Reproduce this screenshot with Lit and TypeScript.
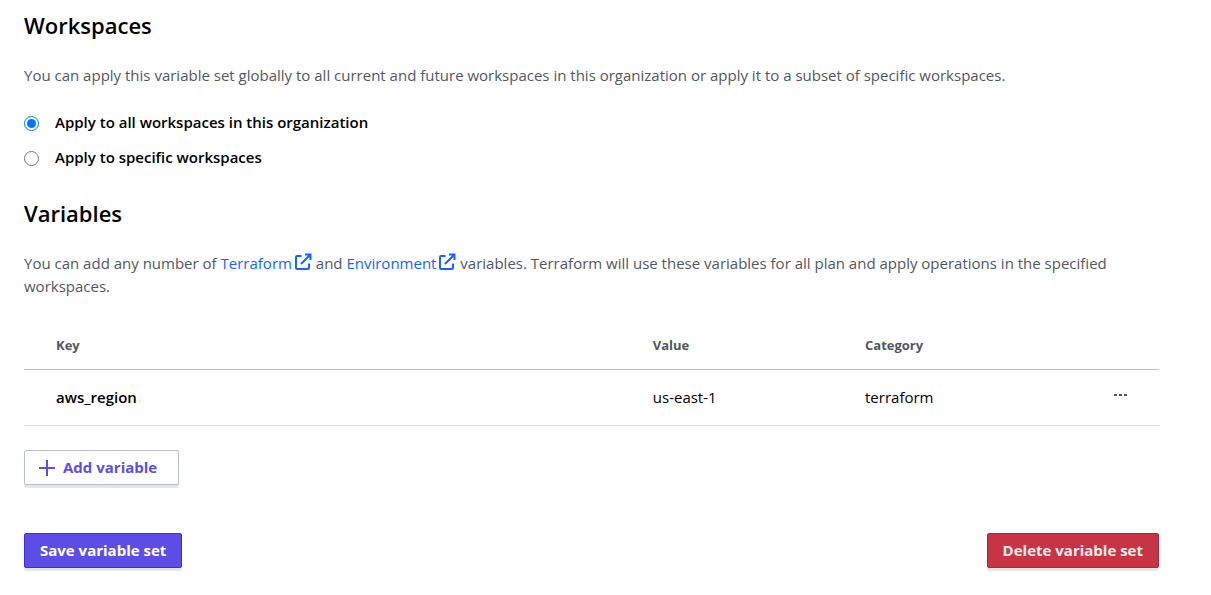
import { LitElement, html, css } from "lit";
import { customElement, state } from "lit/decorators.js";

interface Variable {
  key: string;
  value: string;
  category: string;
}

const externalIcon = html`<svg class="external" viewBox="0 0 18 18" aria-hidden="true">
  <path d="M7.5 3H3.2Q2 3 2 4.2V14.8Q2 16 3.2 16H13.8Q15 16 15 14.8V10.5" />
  <path d="M7 11L16 2M11 1.5H16.5V7" />
</svg>`;

@customElement("app-root")
export class AppRoot extends LitElement {
  static styles = css`
    :host {
      display: block;
      box-sizing: border-box;
      padding: 7px 52px 24px 24px;
      background: #fff;
      color: #000;
      font-family: "Segoe UI", "Open Sans", "Noto Sans", sans-serif;
      font-size: 15px;
      line-height: 23px;
    }
    .title {
      margin: 0;
      font-size: 22px;
      line-height: 36px;
      font-weight: 600;
    }
    .intro {
      margin: 21px 0 0;
      color: #525761;
    }
    .choices {
      margin: 24px 0 26px;
      padding: 0;
      border: 0;
      display: grid;
      gap: 12px;
    }
    .choice {
      display: flex;
      align-items: center;
      gap: 16px;
      font-weight: 600;
    }
    .radio {
      width: 15px;
      height: 15px;
      margin: 2px 0 0;
      accent-color: #0075ff;
    }
    .link {
      color: #1563ff;
      text-decoration: none;
    }
    .external {
      width: 18px;
      height: 18px;
      margin-left: 2px;
      vertical-align: -2px;
      fill: none;
      stroke: currentColor;
      stroke-width: 2;
    }
    .table {
      width: 100%;
      margin-top: 24px;
      border-collapse: collapse;
      table-layout: fixed;
      text-align: left;
    }
    .table th,
    .table td {
      box-sizing: border-box;
      padding: 16px 0;
    }
    .table th {
      padding: 12px 0;
      border-bottom: 1px solid #bac1cc;
      color: #525761;
      font-size: 13px;
      font-weight: 700;
    }
    .table td {
      border-bottom: 1px solid #dce0e6;
    }
    .table .first {
      padding-left: 32px;
    }
    .key-column {
      width: 55.4%;
    }
    .value-column {
      width: 18.7%;
    }
    .name {
      font-weight: 600;
    }
    .table .actions {
      padding: 0 30px 0 0;
      text-align: right;
    }
    .more {
      padding: 0;
      border: 0;
      background: none;
      color: #525761;
      cursor: pointer;
    }
    .dots {
      display: block;
      width: 16px;
      height: 16px;
      fill: currentColor;
    }
    .button {
      display: inline-flex;
      align-items: center;
      gap: 8px;
      height: 35px;
      padding: 0 15px;
      border: 1px solid;
      border-radius: 2px;
      box-shadow: 0 3px 1px rgba(0, 0, 0, 0.1);
      font: inherit;
      font-weight: 700;
      cursor: pointer;
    }
    .add {
      margin-top: 24px;
      padding: 0 21px 0 14px;
      border-color: #bac1cc;
      background: #fff;
      color: #5c4ee5;
    }
    .plus {
      width: 16px;
      height: 16px;
      stroke: currentColor;
      stroke-width: 2;
    }
    .footer {
      display: flex;
      justify-content: space-between;
      margin-top: 48px;
    }
    .save {
      border-color: #3d2edb;
      background: #5c4ee5;
      color: #fff;
    }
    .delete {
      border-color: #a62939;
      background: #c73445;
      color: #fbeaec;
    }
  `;

  @state() private scope = "all";

  private variables: Variable[] = [
    { key: "aws_region", value: "us-east-1", category: "terraform" },
  ];

  private choice(value: string, label: string) {
    return html`<label class="choice">
      <input
        class="radio"
        type="radio"
        name="scope"
        .value=${value}
        .checked=${this.scope === value}
        @change=${() => (this.scope = value)}
      />
      <span>${label}</span>
    </label>`;
  }

  render() {
    return html`
      <section>
        <h2 class="title">Workspaces</h2>
        <p class="intro">
          You can apply this variable set globally to all current and future workspaces in this
          organization or apply it to a subset of specific workspaces.
        </p>
        <fieldset class="choices" aria-label="Workspaces">
          ${this.choice("all", "Apply to all workspaces in this organization")}
          ${this.choice("specific", "Apply to specific workspaces")}
        </fieldset>
      </section>
      <section>
        <h2 class="title">Variables</h2>
        <p class="intro">
          You can add any number of <a class="link" href="#terraform">Terraform${externalIcon}</a>
          and <a class="link" href="#environment">Environment${externalIcon}</a> variables.
          Terraform will use these variables for all plan and apply operations in the specified
          workspaces.
        </p>
        <table class="table">
          <thead>
            <tr>
              <th class="first key-column" scope="col">Key</th>
              <th class="value-column" scope="col">Value</th>
              <th scope="col">Category</th>
              <th scope="col" aria-label="Actions"></th>
            </tr>
          </thead>
          <tbody>
            ${this.variables.map(
              (v) => html`<tr>
                <td class="first name">${v.key}</td>
                <td>${v.value}</td>
                <td>${v.category}</td>
                <td class="actions">
                  <button class="more" type="button" aria-label="More actions">
                    <svg class="dots" viewBox="0 0 16 16" aria-hidden="true">
                      <path d="M1 7h3v2H1zM6 7h3v2H6zM11 7h3v2h-3z" />
                    </svg>
                  </button>
                </td>
              </tr>`
            )}
          </tbody>
        </table>
        <button class="button add" type="button">
          <svg class="plus" viewBox="0 0 16 16" aria-hidden="true"><path d="M8 0V16M0 8H16" /></svg>
          Add variable
        </button>
      </section>
      <footer class="footer">
        <button class="button save" type="button">Save variable set</button>
        <button class="button delete" type="button">Delete variable set</button>
      </footer>
    `;
  }
}
